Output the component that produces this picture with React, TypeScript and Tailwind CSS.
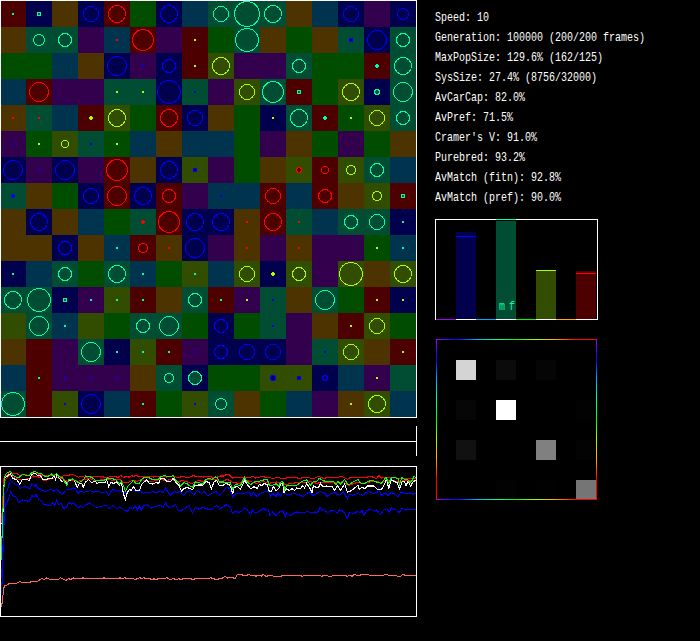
import React from "react";

const cellColors: Record<string, string> = {
  R: "bg-[#4d0000]",
  B: "bg-[#00004d]",
  O: "bg-[#4d3300]",
  G: "bg-[#004d00]",
  P: "bg-[#33004d]",
  C: "bg-[#00334d]",
  T: "bg-[#004d33]",
  Y: "bg-[#334d00]",
};

const markColors: Record<string, [string, string]> = {
  r: ["#ff0000", "#4d0000"],
  b: ["#0000ff", "#00004d"],
  t: ["#00ffaa", "#004d33"],
  y: ["#aaff00", "#334d00"],
};

const terrain = [
  "RBOBRGBCTTTOCBPB",
  "OTTPCRPRGTOGOTBT",
  "GGCOBPBRYPPTGGRT",
  "CRPPTTBTPYTRGYBT",
  "OTCRYGRBOGBTRGYT",
  "PGYTGCOCCGPOGPGO",
  "BPBPROBYPGOYRYTC",
  "TOGBRBRPCCRCROYR",
  "OBOCGTRBBORTCTTB",
  "OOBOCROBPOPOPPGC",
  "BCTGTCGYCYBYPYOY",
  "TTBPYROTRPTOTGRB",
  "YTCYGTTGBGTPORYG",
  "ORPTBYRPBBBPTYOR",
  "CRPPPOTBGGYYBCPT",
  "TRYBCRGYTOGCPOYC",
];

// Each entry is column, colour, outer radius (1 = dot, 2 = small square, p = plus).
const marks = [
  "0t1 1t2 3b8 4r9 6b9 8t8 9t13 10t9 13b8 15b6",
  "1t6 2t7 4r1 5r11 7y1 9t12 13b2 14b10 15t7",
  "4b10 5b1 6b7 7y1 8y9 11t7 14tp 15t9",
  "1r10 4y1 5y1 6b12 7b1 9y8 10t11 11t2 13y9 14t3 15t10",
  "0r1 1r1 3yp 4y9 6r9 7b8 10y1 11t9 12tp 13y1 14y8 15t7",
  "0b1 1y1 2y4 3b1 4y1",
  "0b10 1b1 2b10 4r11 6b9 7b2 11r3 12r4 13y5 14t7",
  "0bp 3b8 4r10 5b9 6r7 8b1 10r8 12r7 14y5 15t2",
  "1b9 5rp 6r11 7b9 8b9 9r1 10r9 11r1 13t7 14t8 15t1",
  "2b7 4t1 5r5 6r1 7b10 9r1 11r1 14y1 15t1",
  "0t1 2t7 4t9 5t1 7t1 9y8 10yp 11y7 13y12 15y9",
  "0t9 1t12 2t2 3t1 4t1 5t1 7t7 8t1 9y1 10b1 12t10 14y1 15y1",
  "1t10 2t1 5t7 6t10 8b7 10b1 13y1 14y8",
  "3t10 4t1 5t1 6t1 7b1 8b7 9b8 10b8 12b1 13y8 15y1",
  "1t1 2b1 3b1 4b1 6t5 7t7 10b3 11b2 12b3 14y1",
  "0t12 2b1 3b10 5t1 7b1 8t6 13y1 14y9",
].map((row) => {
  const out: Record<number, { color: string; fill: string; size: string }> = {};
  row.split(" ").forEach((m) => {
    const f = /^(\d+)([rbty])(\w+)$/.exec(m)!;
    const [color, fill] = markColors[f[2]];
    out[+f[1]] = { color, fill, size: f[3] };
  });
  return out;
});

function Mark({ color, fill, size }: { color: string; fill: string; size: string }) {
  let shape;
  if (size === "1") shape = <rect x="12" y="12" width="2" height="2" fill={color} />;
  else if (size === "p") shape = <path d="M12 11h2v1h1v2h-1v1h-2v-1h-1v-2h1z" fill={color} />;
  else if (size === "2")
    shape = (
      <>
        <rect x="11" y="11" width="4" height="4" fill={color} />
        <rect x="12" y="12" width="2" height="2" fill={fill} />
      </>
    );
  else if (size === "3")
    shape = (
      <>
        <path d="M11 10h4v1h1v4h-1v1h-4v-1h-1v-4h1z" fill={color} />
        <path d="M12 11h2v1h1v2h-1v1h-2v-1h-1v-2h1z" fill={fill} />
      </>
    );
  else shape = <circle cx="13" cy="13" r={+size - 0.5} fill={fill} stroke={color} />;
  return (
    <svg width="26" height="26" className="block overflow-visible" shapeRendering="crispEdges">
      {shape}
    </svg>
  );
}

function World() {
  return (
    <div className="relative h-[418px] w-[417px] overflow-hidden pt-px">
      <div className="grid w-[416px] grid-cols-16">
        {terrain.map((row, y) =>
          row.split("").map((c, x) => (
            <div key={`${x}-${y}`} className={`h-[26px] w-[26px] ${cellColors[c]}`}>
              {marks[y][x] && <Mark {...marks[y][x]} />}
            </div>
          )),
        )}
      </div>
      <div className="absolute inset-0 border border-white" />
    </div>
  );
}

// Series are sampled at three units per pixel.
const series: { color: string; points: string }[] = [
  {
    color: "#ff6666",
    points:
      "4,562 7,545 10,515 13,496 20,496 27,491 50,490 58,485 66,487 88,487 95,485 113,484 125,476 133,478 140,474 150,478 175,478 182,473 190,478 198,481 206,476 212,478 220,474 228,476 243,476 249,473 255,476 306,476 312,473 318,476 354,476 360,473 366,476 375,473 381,476 400,476 405,479 412,476 419,473 425,476 432,473 438,476 450,476 456,479 462,476 468,479 474,476 494,476 501,473 510,479 520,476 530,479 536,476 543,479 550,476 573,476 579,479 585,476 624,476 632,473 638,475 646,478 664,476 676,469 682,474 690,472 705,475 712,464 740,466 746,463 752,466 762,466 768,469 774,466 784,468 790,463 798,469 812,466 822,469 842,469 849,466 900,466 906,469 914,466 958,466 965,469 972,466 990,469 1010,466 1036,466 1042,469 1050,466 1056,469 1062,463 1072,466 1100,463 1110,466 1150,466 1158,463 1166,466 1186,466 1194,469 1202,469 1208,463 1216,466 1230,468 1248,466",
  },
  {
    color: "#ff0000",
    points:
      "4,310 8,250 12,175 20,166 30,157 38,160 50,160 58,166 72,163 86,166 96,160 108,160 120,164 130,166 160,166 168,163 180,170 198,166 220,164 228,168 235,172 243,168 255,172 280,169 300,170 320,172 340,169 354,172 362,166 370,172 380,169 388,172 395,166 400,170 408,166 416,170 440,169 460,171 480,169 500,171 520,169 532,172 550,170 566,173 580,167 590,170 610,171 630,170 645,173 660,168 672,168 680,163 688,164 698,174 706,172 750,172 758,169 766,174 790,169 796,173 808,172 818,176 830,173 850,175 880,172 898,175 920,172 940,176 956,169 970,175 990,172 1006,174 1024,169 1034,173 1042,178 1050,173 1100,172 1110,168 1120,172 1130,176 1136,166 1144,174 1170,172 1200,175 1220,175 1248,174",
  },
  {
    color: "#ff0000",
    points:
      "6,300 13,185 20,175 30,165 40,172 56,178 70,178 88,176 100,168 120,172 132,182 146,178 170,172 180,177 190,175 200,184 216,180 235,184 250,179 270,176 285,183 300,180 318,177 338,181 360,178 368,187 384,188 396,181 412,184 424,179 440,183 458,184 480,178 495,181 518,179 532,188 545,181 562,186 576,191 592,182 612,184 624,178 650,178 660,187 682,178 700,188 720,190 730,178 748,184 770,190 790,184 806,190 830,186 846,191 860,193 890,188 915,188 930,185 950,190 970,186 1006,189 1030,185 1045,196 1070,188 1090,190 1120,184 1145,187 1160,184 1178,181 1196,187 1212,180 1248,181",
  },
  {
    color: "#0000ff",
    points:
      "5,522 8,430 11,320 14,220 22,212 31,180 40,191 53,194 60,206 74,199 90,206 95,192 103,199 108,194 114,205 126,211 140,214 152,208 162,214 170,208 178,216 188,222 198,210 210,209 220,204 226,206 234,220 242,213 252,217 270,212 280,216 292,214 310,219 318,214 326,225 332,216 340,208 350,214 360,211 370,220 378,218 388,214 398,206 408,215 420,212 430,220 438,216 448,218 458,214 468,218 480,213 490,217 497,204 506,220 512,226 522,214 532,218 540,214 550,227 560,216 570,212 582,225 592,211 604,220 612,214 622,227 634,222 648,214 658,226 668,218 676,205 684,202 690,210 698,230 706,222 716,220 728,222 738,218 748,216 754,230 760,218 772,230 780,220 792,216 800,214 806,216 812,230 818,220 828,230 834,218 842,230 848,217 858,222 870,224 880,220 896,224 908,230 918,222 928,215 938,226 948,222 958,215 974,218 980,230 990,222 1004,217 1012,224 1022,222 1030,215 1042,236 1048,222 1060,226 1072,220 1088,226 1098,218 1108,214 1118,220 1132,218 1136,204 1144,226 1156,218 1164,227 1174,217 1184,222 1194,230 1204,216 1218,222 1228,219 1240,223 1248,220",
  },
  {
    color: "#0000ff",
    points:
      "5,475 8,400 12,312 15,258 22,248 32,215 40,228 50,232 56,248 68,240 82,243 88,244 95,226 102,231 108,224 116,238 126,243 132,254 152,257 158,247 164,257 170,240 176,254 184,250 190,265 200,262 206,248 214,252 222,250 234,264 242,258 250,263 258,254 268,249 278,256 290,262 304,260 318,255 328,266 338,256 350,265 362,262 372,270 382,274 390,262 398,266 406,258 412,270 418,258 424,270 430,258 442,255 454,264 466,259 482,256 490,262 497,249 506,263 516,260 526,255 534,270 544,273 556,264 566,256 578,279 586,262 598,268 608,262 622,267 636,268 644,259 652,257 660,267 668,262 678,254 690,260 698,280 706,274 716,277 728,272 734,263 742,270 752,284 758,270 764,278 774,276 784,270 792,264 798,272 804,267 810,286 818,276 828,286 836,277 848,272 856,290 860,278 870,288 878,282 890,276 906,278 924,275 934,278 944,276 952,278 960,263 966,272 974,268 982,280 992,273 1004,272 1012,280 1018,270 1030,274 1042,295 1048,278 1060,281 1072,275 1080,277 1086,272 1092,286 1100,272 1112,268 1124,274 1130,270 1142,284 1150,271 1160,266 1168,277 1174,264 1188,270 1198,278 1206,265 1220,270 1232,268 1248,268",
  },
  {
    color: "#ffffff",
    points:
      "4,310 8,310 11,205 14,175 20,170 31,161 38,176 50,178 60,193 66,180 74,178 88,181 95,163 106,160 112,166 122,168 130,180 142,177 156,175 162,166 167,179 171,163 178,175 186,186 192,180 200,190 206,184 214,178 222,180 232,202 238,190 246,191 250,202 256,186 266,179 276,188 286,182 290,190 300,187 316,186 320,180 326,199 332,188 342,190 350,186 358,196 364,186 370,220 376,238 382,218 388,208 394,212 400,200 408,211 418,212 424,195 432,186 440,180 448,190 458,192 468,188 476,190 482,175 492,176 500,184 510,186 520,175 530,190 538,198 544,213 552,206 560,202 570,206 578,209 584,197 594,195 608,195 618,184 628,188 634,206 642,186 650,181 658,196 666,198 678,190 688,194 694,206 698,222 702,202 712,200 722,207 734,180 742,194 752,206 762,200 772,205 778,194 786,196 792,190 802,195 808,215 814,215 820,200 828,212 836,206 842,192 848,188 852,218 860,206 868,212 876,206 884,212 890,204 902,205 908,197 914,204 920,190 930,206 936,218 940,198 948,202 956,202 962,190 968,200 980,198 996,200 1004,212 1012,196 1022,211 1034,192 1042,217 1054,212 1064,204 1074,196 1078,208 1086,202 1094,206 1102,198 1122,198 1132,208 1144,208 1152,196 1160,176 1166,206 1174,180 1182,184 1192,188 1198,208 1206,186 1212,183 1218,196 1224,184 1232,198 1240,184 1248,182",
  },
  {
    color: "#00ff00",
    points:
      "4,420 7,320 10,240 13,180 16,163 24,157 32,155 38,166 46,170 54,173 60,170 68,163 82,167 90,165 96,157 106,155 116,160 126,162 132,168 144,169 154,162 162,168 170,160 176,170 186,173 192,182 200,196 206,180 218,177 226,182 236,188 244,184 252,178 257,168 268,169 278,174 288,183 300,181 314,180 322,174 334,176 346,178 352,184 358,192 364,184 370,196 376,213 384,198 392,190 400,181 408,192 418,190 426,177 434,172 446,173 458,179 474,178 482,170 494,167 508,170 520,167 528,182 536,188 542,198 552,188 562,192 570,198 578,202 586,186 596,187 608,192 616,180 626,175 636,178 646,171 652,172 658,186 670,186 690,188 698,207 706,194 722,196 734,172 740,184 752,194 764,186 776,184 790,180 802,179 808,196 818,196 828,191 836,198 844,184 850,188 854,210 860,198 872,196 890,196 902,187 910,182 920,180 932,196 940,184 950,184 958,175 970,182 984,186 1000,184 1008,194 1014,184 1022,192 1034,178 1044,195 1058,187 1074,178 1080,188 1092,192 1104,184 1118,181 1130,186 1144,190 1158,172 1166,190 1174,173 1188,174 1194,176 1198,194 1206,173 1214,178 1222,178 1230,188 1236,181 1242,169 1248,174",
  },
];

function History() {
  return (
    <div className="mt-[10px] h-[151px] w-[417px] border border-white">
      <svg width="415" height="149" viewBox="3 141 1245 447" shapeRendering="crispEdges" className="block">
        {series.map((s, i) => (
          <polyline key={i} points={s.points} fill="none" stroke={s.color} strokeWidth="3.2" />
        ))}
      </svg>
    </div>
  );
}

const stats = [
  "Speed: 10",
  "Generation: 100000 (200/200 frames)",
  "MaxPopSize: 129.6% (162/125)",
  "SysSize: 27.4% (8756/32000)",
  "AvCarCap: 82.0%",
  "AvPref: 71.5%",
  "Cramer's V: 91.0%",
  "Purebred: 93.2%",
  "AvMatch (fitn): 92.8%",
  "AvMatch (pref): 90.0%",
];

function Bars() {
  return (
    <div className="relative mt-[11px] h-[101px] w-[163px] border border-white">
      <div className="absolute -bottom-px left-0 flex h-[101px] w-[161px] items-end">
        <div className="h-px w-5 bg-[#aa00ff]" />
        <div className="h-[88px] w-5 border-b border-white bg-[#00004d] pt-1">
          <div className="h-px bg-[#0000ff]" />
        </div>
        <div className="h-px w-5 bg-[#00aaff]" />
        <div className="flex h-[101px] w-5 flex-col border-b border-white">
          <div className="h-px bg-[#00ffaa]" />
          <div className="h-px bg-black" />
          <div className="flex flex-1 items-end bg-[#004d33] pb-1 pl-[2.5px] font-['Liberation_Mono',monospace] text-[13px] leading-[16px] text-[#00ffaa]">
            <span className="block origin-left scale-x-[.769] tracking-[5.2px]">mf</span>
          </div>
        </div>
        <div className="h-px w-5 bg-[#00ff00]" />
        <div className="h-[50px] w-5 border-b border-white bg-[#334d00]">
          <div className="h-px bg-[#aaff00]" />
        </div>
        <div className="h-px w-5 bg-[#ffaa00]" />
        <div className="h-[49px] w-5 border-b border-white bg-[#4d0000] pt-[2px]">
          <div className="h-px bg-[#ff0000]" />
        </div>
      </div>
    </div>
  );
}

const shades = [
  ["bg-[#d4d4d4]", "bg-[#0b0b0b]", "bg-[#050505]", "bg-black"],
  ["bg-[#060606]", "bg-white", "bg-black", "bg-[#020202]"],
  ["bg-[#111111]", "bg-black", "bg-[#808080]", "bg-[#030303]"],
  ["bg-black", "bg-[#020202]", "bg-[#010101]", "bg-[#757575]"],
];

function Matrix() {
  const across = "bg-[linear-gradient(to_right,#aa00ff_0px,#0000ff_20px,#00aaff_40px,#00ffaa_60px,#00ff00_80px,#aaff00_100px,#ffaa00_120px,#ff0000_140px)]";
  const down = "bg-[linear-gradient(to_bottom,#aa00ff_0px,#0000ff_20px,#00aaff_40px,#00ffaa_60px,#00ff00_80px,#aaff00_100px,#ffaa00_120px,#ff0000_140px)]";
  return (
    <div className="relative mt-[19px] ml-px h-[161px] w-[161px] overflow-hidden">
      <div className="grid w-[160px] grid-cols-4 gap-5 pt-[21px] pl-5">
        {shades.flat().map((c, i) => (
          <div key={i} className={`h-5 w-5 ${c}`} />
        ))}
      </div>
      <div className={`absolute top-0 left-0 h-px w-full ${across}`} />
      <div className={`absolute bottom-0 left-0 h-px w-full ${across}`} />
      <div className={`absolute top-0 left-0 h-full w-px ${down}`} />
      <div className={`absolute top-0 right-0 h-full w-px ${down}`} />
    </div>
  );
}

export default function App() {
  return (
    <div className="flex h-[641px] w-[700px] overflow-hidden bg-black">
      <div className="w-[417px]">
        <World />
        <div className="mt-2 flex h-[30px] items-center border-r border-white pt-px">
          <div className="h-px w-full bg-white" />
        </div>
        <History />
      </div>
      <div className="ml-[18px] flex-1 pt-2">
        <div className="font-['Liberation_Mono',monospace] text-[13px] leading-[20px] text-white">
          {stats.map((s) => (
            <div key={s} className="h-5 w-max origin-left scale-x-[.769] whitespace-pre">
              {s}
            </div>
          ))}
        </div>
        <Bars />
        <Matrix />
      </div>
    </div>
  );
}
